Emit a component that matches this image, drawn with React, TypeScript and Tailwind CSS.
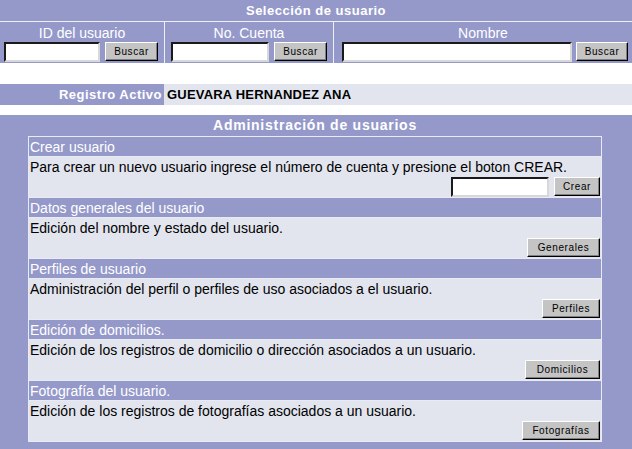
import React from "react";

// colores del sistema antiguo
const PURPLE = "bg-[#9599ca]";
const LIGHT = "bg-[#e2e5ee]";

function Boton({ label, w }: { label: string; w: string }) {
  return (
    <button
      className={`${w} h-[19px] shrink-0 bg-[#c4c4c4] border border-t-white border-l-white border-r-black border-b-black shadow-[inset_-1px_-1px_0_#808080] text-[10px] leading-none tracking-[0.6px] text-black font-['Liberation_Sans',Arial,sans-serif]`}
    >
      {label}
    </button>
  );
}

function Campo({ w }: { w: string }) {
  return (
    <input
      type="text"
      className={`${w} h-[20px] shrink-0 bg-white border-2 border-t-[#1a1a1a] border-l-[#1a1a1a] border-r-[#d8d8d8] border-b-[#d8d8d8] outline-none`}
    />
  );
}

const SECCIONES = [
  {
    titulo: "Crear usuario",
    texto: "Para crear un nuevo usuario ingrese el número de cuenta y presione el boton CREAR.",
    boton: "Crear",
    w: "w-[46px]",
    conCampo: true,
  },
  {
    titulo: "Datos generales del usuario",
    texto: "Edición del nombre y estado del usuario.",
    boton: "Generales",
    w: "w-[73px]",
  },
  {
    titulo: "Perfiles de usuario",
    texto: "Administración del perfil o perfiles de uso asociados a el usuario.",
    boton: "Perfiles",
    w: "w-[58px]",
  },
  {
    titulo: "Edición de domicilios.",
    texto: "Edición de los registros de domicilio o dirección asociados a un usuario.",
    boton: "Domicilios",
    w: "w-[75px]",
  },
  {
    titulo: "Fotografía del usuario.",
    texto: "Edición de los registros de fotografías asociados a un usuario.",
    boton: "Fotografías",
    w: "w-[78px]",
  },
];

export default function App() {
  return (
    <div className="w-[632px] h-[449px] overflow-hidden bg-white font-['Liberation_Sans',Arial,sans-serif] text-[14px]">
      {/* Selección de usuario */}
      <div className="flex flex-col gap-px bg-[#eef0f7]">
        <div className={`${PURPLE} h-[21px] flex items-center justify-center text-white font-bold text-[13px] tracking-[0.5px]`}>
          Selección de usuario
        </div>
        <div className="grid grid-cols-[164px_168px_298px] gap-px h-[41px]">
          <div className={`${PURPLE} flex flex-col`}>
            <div className="h-[20px] flex items-end justify-center text-white leading-none pb-[2px]">ID del usuario</div>
            <div className="flex items-start gap-[5px] pl-[4px]">
              <Campo w="w-[96px]" />
              <Boton label="Buscar" w="w-[53px]" />
            </div>
          </div>
          <div className={`${PURPLE} flex flex-col`}>
            <div className="h-[20px] flex items-end justify-center text-white leading-none pb-[2px]">No. Cuenta</div>
            <div className="flex items-start gap-[5px] pl-[6px]">
              <Campo w="w-[98px]" />
              <Boton label="Buscar" w="w-[53px]" />
            </div>
          </div>
          <div className={`${PURPLE} flex flex-col`}>
            <div className="h-[20px] flex items-end justify-center text-white leading-none pb-[2px]">Nombre</div>
            <div className="flex items-start gap-[4px] pl-[8px]">
              <Campo w="w-[230px]" />
              <Boton label="Buscar" w="w-[52px]" />
            </div>
          </div>
        </div>
      </div>

      {/* Registro activo */}
      <div className="mt-[21px] flex h-[21px] font-bold text-[13px]">
        <div className={`${PURPLE} w-[164px] flex items-center justify-end pr-[2px] text-white tracking-[0.5px]`}>
          Registro Activo
        </div>
        <div className={`${LIGHT} flex-1 flex items-center pl-[3px] text-black tracking-[0.2px]`}>
          GUEVARA HERNANDEZ ANA
        </div>
      </div>

      {/* Administración de usuarios */}
      <div className={`${PURPLE} mt-[10px] h-[400px] pl-[28px] pr-[30px]`}>
        <div className="h-[21px] flex items-center justify-center text-white font-bold text-[14px] tracking-[0.75px]">
          Administración de usuarios
        </div>
        <div className="bg-[#e8ebf3] p-px flex flex-col gap-px">
          {SECCIONES.map((s) => (
            <React.Fragment key={s.titulo}>
              <div className={`${PURPLE} h-[19px] flex items-center pl-[1px] text-white leading-none`}>
                {s.titulo}
              </div>
              <div className={`${LIGHT} h-[40px] flex flex-col`}>
                <div className="h-[20px] flex items-center pl-[1px] text-black leading-none">{s.texto}</div>
                <div className="flex justify-end gap-[5px] pr-[1px]">
                  {s.conCampo && <Campo w="w-[98px]" />}
                  <Boton label={s.boton} w={s.w} />
                </div>
              </div>
            </React.Fragment>
          ))}
        </div>
      </div>
    </div>
  );
}
